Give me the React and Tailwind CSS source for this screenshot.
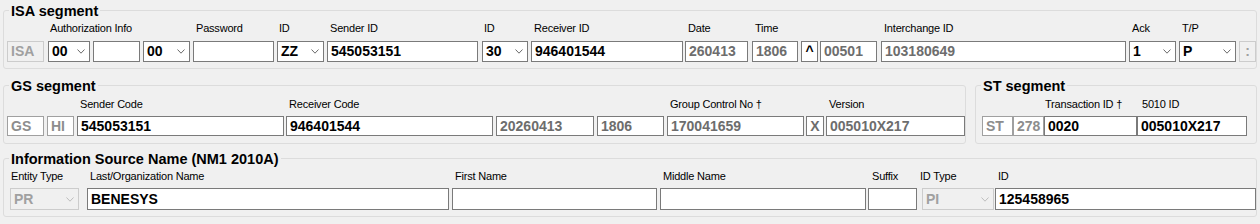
import React from "react";

const Chevron = ({ color = "#6a6a6a" }) => (
  <svg width="8" height="5" viewBox="0 0 8 5">
    <path d="M0.5 0.5L4 4.2L7.5 0.5" fill="none" stroke={color} strokeWidth="1" />
  </svg>
);

const kinds = {
  edit: "bg-white border-[#7a7a7a] text-black",
  ro: "bg-white border-[#7a7a7a] text-[#6d6d6d]",
  lite: "bg-white border-[#a0a0a0] text-[#8d8d8d]",
  dis: "bg-[#f0f0f0] border-[#cccccc] text-[#a0a0a0]",
};

const Box = ({ v, h, kind = "edit", center }) => (
  <div
    className={`${h} w-full border ${kinds[kind]} flex items-center ${
      center ? "justify-center" : "pl-[3px]"
    } text-[14px] font-bold whitespace-nowrap overflow-hidden`}
  >
    {v}
  </div>
);

const Combo = ({ v, h, disabled }) => (
  <div
    className={`${h} w-full border flex items-center ${
      disabled ? "bg-[#f0f0f0] border-[#cccccc] text-[#a0a0a0]" : "bg-white border-[#7a7a7a] text-black"
    }`}
  >
    <span className="flex-1 pl-[3px] text-[14px] font-bold whitespace-nowrap">{v}</span>
    <span className="w-[17px] flex justify-center">
      <Chevron color={disabled ? "#bdbdbd" : "#6a6a6a"} />
    </span>
  </div>
);

const Field = ({ w, ml = "", label, lc = "pl-[3px]", gap, children }) => (
  <div className={`flex flex-col shrink-0 ${w} ${ml}`}>
    <div className={`h-[13px] text-[11px] leading-[13px] tracking-[-0.2px] whitespace-nowrap ${lc}`}>{label}</div>
    <div className={gap}>{children}</div>
  </div>
);

const Legend = ({ children }) => (
  <legend className="ml-[5px] px-[2px] pt-[2px] text-[14.5px] font-bold leading-[16px]">{children}</legend>
);

export default function App() {
  const a = "h-[21px]";
  const g = "h-[20px]";
  const n = "h-[22px]";
  return (
    <div className="w-[1260px] h-[224px] overflow-hidden bg-[#f0f0f0] px-[3px] font-['Liberation_Sans',Arial,sans-serif] text-black">
      <fieldset className="mt-[1px] border border-[#dcdcdc] rounded-[3px] pb-[6px]">
        <Legend>ISA segment</Legend>
        <div className="flex pt-[3px] pl-[3px]">
          <Field w="w-[37px]" gap="mt-[6px]"><Box v="ISA" h={a} kind="dis" /></Field>
          <Field w="w-[42px]" ml="ml-[4px]" label="Authorization Info" lc="pl-[2px]" gap="mt-[6px]"><Combo v="00" h={a} /></Field>
          <Field w="w-[47px]" ml="ml-[3px]" gap="mt-[6px]"><Box v="" h={a} /></Field>
          <Field w="w-[47px]" ml="ml-[3px]" gap="mt-[6px]"><Combo v="00" h={a} /></Field>
          <Field w="w-[81px]" ml="ml-[3px]" label="Password" gap="mt-[6px]"><Box v="" h={a} /></Field>
          <Field w="w-[47px]" ml="ml-[3px]" label="ID" lc="pl-[2px]" gap="mt-[6px]"><Combo v="ZZ" h={a} /></Field>
          <Field w="w-[151px]" ml="ml-[3px]" label="Sender ID" gap="mt-[6px]"><Box v="545053151" h={a} /></Field>
          <Field w="w-[46px]" ml="ml-[4px]" label="ID" lc="pl-[2px]" gap="mt-[6px]"><Combo v="30" h={a} /></Field>
          <Field w="w-[152px]" ml="ml-[3px]" label="Receiver ID" gap="mt-[6px]"><Box v="946401544" h={a} /></Field>
          <Field w="w-[63px]" ml="ml-[2px]" label="Date" gap="mt-[6px]"><Box v="260413" h={a} kind="ro" /></Field>
          <Field w="w-[46px]" ml="ml-[4px]" label="Time" gap="mt-[6px]"><Box v="1806" h={a} kind="ro" /></Field>
          <Field w="w-[17px]" ml="ml-[3px]" gap="mt-[6px]"><Box v="^" h={a} center /></Field>
          <Field w="w-[57px]" ml="ml-[2px]" gap="mt-[6px]"><Box v="00501" h={a} kind="ro" /></Field>
          <Field w="w-[245px]" ml="ml-[4px]" label="Interchange ID" gap="mt-[6px]"><Box v="103180649" h={a} kind="ro" /></Field>
          <Field w="w-[47px]" ml="ml-[3px]" label="Ack" gap="mt-[6px]"><Combo v="1" h={a} /></Field>
          <Field w="w-[57px]" ml="ml-[3px]" label="T/P" gap="mt-[6px]"><Combo v="P" h={a} /></Field>
          <Field w="w-[17px]" ml="ml-[3px]" gap="mt-[6px]"><Box v=":" h={a} kind="dis" center /></Field>
        </div>
      </fieldset>

      <div className="flex gap-[9px] mt-[7px]">
        <fieldset className="w-[963px] shrink-0 border border-[#dcdcdc] rounded-[3px] pb-[7px]">
          <Legend>GS segment</Legend>
          <div className="flex pt-[4px] pl-[3px]">
            <Field w="w-[37px]" gap="mt-[5px]"><Box v="GS" h={g} kind="lite" /></Field>
            <Field w="w-[27px]" ml="ml-[3px]" gap="mt-[5px]"><Box v="HI" h={g} kind="lite" /></Field>
            <Field w="w-[207px]" ml="ml-[3px]" label="Sender Code" gap="mt-[5px]"><Box v="545053151" h={g} /></Field>
            <Field w="w-[207px]" ml="ml-[2px]" label="Receiver Code" gap="mt-[5px]"><Box v="946401544" h={g} /></Field>
            <Field w="w-[98px]" ml="ml-[3px]" gap="mt-[5px]"><Box v="20260413" h={g} kind="ro" /></Field>
            <Field w="w-[67px]" ml="ml-[3px]" gap="mt-[5px]"><Box v="1806" h={g} kind="ro" /></Field>
            <Field w="w-[137px]" ml="ml-[3px]" label="Group Control No †" gap="mt-[5px]"><Box v="170041659" h={g} kind="ro" /></Field>
            <Field w="w-[18px]" ml="ml-[2px]" gap="mt-[5px]"><Box v="X" h={g} kind="ro" center /></Field>
            <Field w="w-[139px]" ml="ml-[2px]" label="Version" gap="mt-[5px]"><Box v="005010X217" h={g} kind="ro" /></Field>
          </div>
        </fieldset>
        <fieldset className="flex-1 border border-[#dcdcdc] rounded-[3px] pb-[7px]">
          <Legend>ST segment</Legend>
          <div className="flex pt-[4px] pl-[6px]">
            <Field w="w-[31px]" gap="mt-[5px]"><Box v="ST" h={g} kind="lite" /></Field>
            <Field w="w-[31px]" gap="mt-[5px]"><Box v="278" h={g} kind="lite" /></Field>
            <Field w="w-[93px]" label="Transaction ID †" lc="pl-[1px]" gap="mt-[5px]"><Box v="0020" h={g} /></Field>
            <Field w="w-[110px]" label="5010 ID" lc="pl-[5px]" gap="mt-[5px]"><Box v="005010X217" h={g} /></Field>
          </div>
        </fieldset>
      </div>

      <fieldset className="mt-[5px] border border-[#dcdcdc] rounded-[3px] pb-[6px]">
        <Legend>Information Source Name (NM1 2010A)</Legend>
        <div className="flex pt-[3px] pl-[6px]">
          <Field w="w-[69px]" label="Entity Type" lc="pl-[1px]" gap="mt-[5px]"><Combo v="PR" h={n} disabled /></Field>
          <Field w="w-[362px]" ml="ml-[8px]" label="Last/Organization Name" gap="mt-[5px]"><Box v="BENESYS" h={n} /></Field>
          <Field w="w-[205px]" ml="ml-[3px]" label="First Name" gap="mt-[5px]"><Box v="" h={n} /></Field>
          <Field w="w-[206px]" ml="ml-[3px]" label="Middle Name" gap="mt-[5px]"><Box v="" h={n} /></Field>
          <Field w="w-[49px]" ml="ml-[2px]" label="Suffix" lc="pl-[4px]" gap="mt-[5px]"><Box v="" h={n} /></Field>
          <Field w="w-[72px]" ml="ml-[5px]" label="ID Type" lc="ml-[-2px]" gap="mt-[5px]"><Combo v="PI" h={n} disabled /></Field>
          <Field w="w-[261px]" ml="ml-[1px]" label="ID" gap="mt-[5px]"><Box v="125458965" h={n} /></Field>
        </div>
      </fieldset>
    </div>
  );
}
